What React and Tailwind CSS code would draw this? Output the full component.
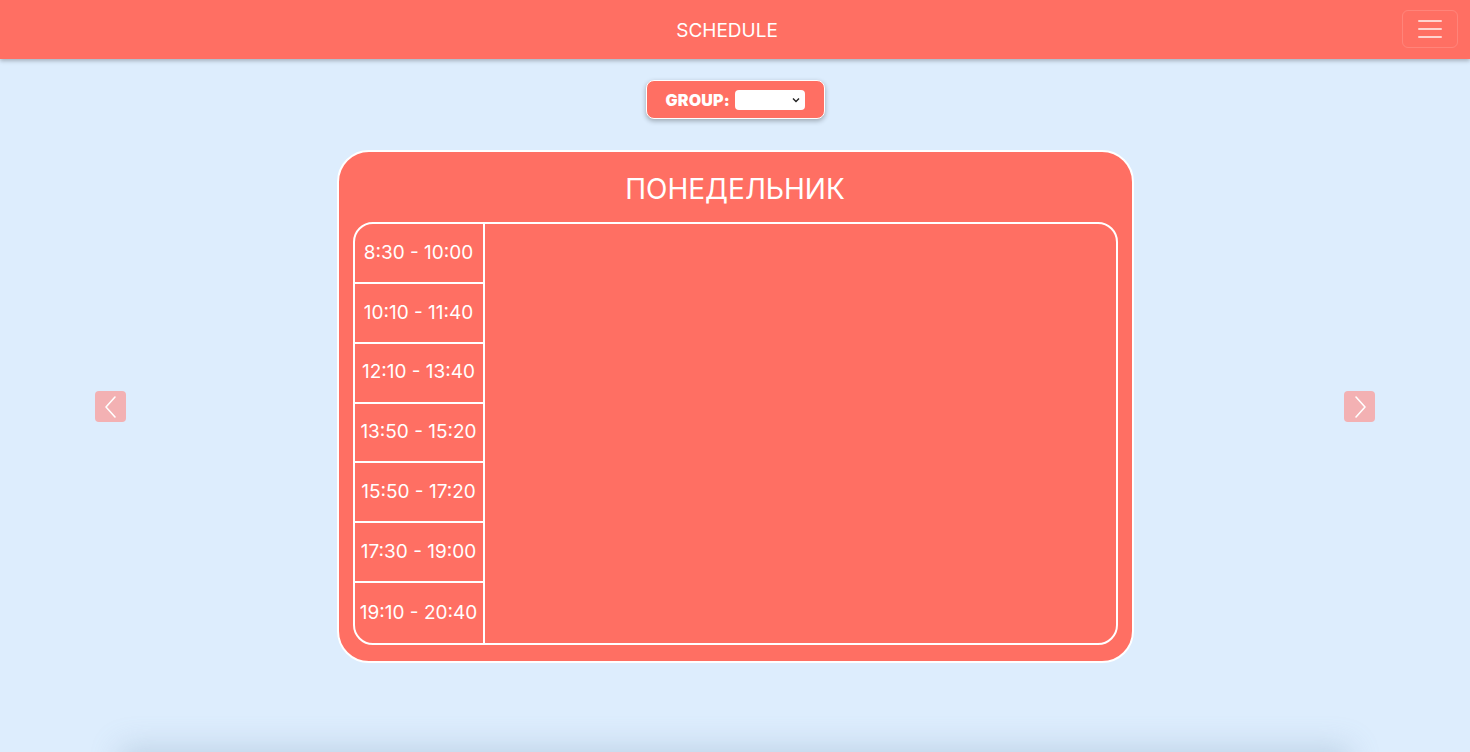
import React from 'react';

const times = [
  '8:30 - 10:00',
  '10:10 - 11:40',
  '12:10 - 13:40',
  '13:50 - 15:20',
  '15:50 - 17:20',
  '17:30 - 19:00',
  '19:10 - 20:40',
];

const Arrow = ({ dir }) => (
  <button className="w-[31px] h-[31px] rounded-[4px] bg-[#f3b1b3] flex items-center justify-center">
    <svg width="16" height="24" viewBox="0 0 16 24" fill="none" stroke="white" strokeWidth="1.6" strokeLinecap="round" strokeLinejoin="round">
      {dir === 'left' ? <path d="M12 2 L3 12 L12 22" /> : <path d="M4 2 L13 12 L4 22" />}
    </svg>
  </button>
);

export default function App() {
  return (
    <div className="min-h-[752px] bg-[#ddedfd] font-['Inter','Liberation_Sans',sans-serif] text-white">
      <header className="h-[59px] bg-[#ff6f63] shadow-[0_2px_4px_rgba(0,0,0,0.25)] relative flex items-center justify-center pr-[16px]">
        <h1 className="text-[19px] leading-[24px] mt-[2px]">SCHEDULE</h1>
        <button className="absolute right-[12px] top-[10px] w-[56px] h-[38px] rounded-[6px] border border-white/15 flex flex-col items-center justify-center gap-[6px]">
          <span className="block w-[24px] h-[2px] bg-white/70 rounded" />
          <span className="block w-[24px] h-[2px] bg-white/70 rounded" />
          <span className="block w-[24px] h-[2px] bg-white/70 rounded" />
        </button>
      </header>

      <div className="flex justify-center pt-[21px]">
        <div className="w-[179px] h-[39px] bg-[#ff6f63] border border-white rounded-[8px] shadow-[0_2px_5px_rgba(0,0,0,0.3)] flex items-center pl-[19px] gap-[5px]">
          <span className="text-[16px] font-black tracking-[0.2px]">GROUP:</span>
          <div className="w-[70px] h-[20px] bg-white rounded-[4px] flex items-center justify-end pr-[4px]">
            <svg width="10" height="8" viewBox="0 0 10 8" fill="none" stroke="#222" strokeWidth="1.4">
              <path d="M2 2.5 L5 5.5 L8 2.5" />
            </svg>
          </div>
        </div>
      </div>

      <div className="flex items-center justify-between px-[95px] mt-[31px]">
        <Arrow dir="left" />
        <div className="w-[797px] h-[513px] bg-[#ff6f63] border-2 border-white rounded-[32px] px-[14px] pt-[18px]">
          <h2 className="text-center text-[28px] leading-[38px]">ПОНЕДЕЛЬНИК</h2>
          <div className="mt-[14px] h-[423px] border-2 border-white rounded-[20px] flex overflow-hidden">
            <div className="w-[130px] border-r-2 border-white flex flex-col">
              {times.map((t, i) => (
                <div
                  key={t}
                  className={`h-[60px] flex items-center justify-center text-[19px] ${i < times.length - 1 ? 'border-b-2 border-white' : ''}`}
                >
                  {t}
                </div>
              ))}
            </div>
            <div className="flex-1" />
          </div>
        </div>
        <Arrow dir="right" />
      </div>

      <div className="mt-[90px] mx-[120px] h-[40px] shadow-[0_-6px_30px_rgba(120,150,180,0.3)]" />
    </div>
  );
}
